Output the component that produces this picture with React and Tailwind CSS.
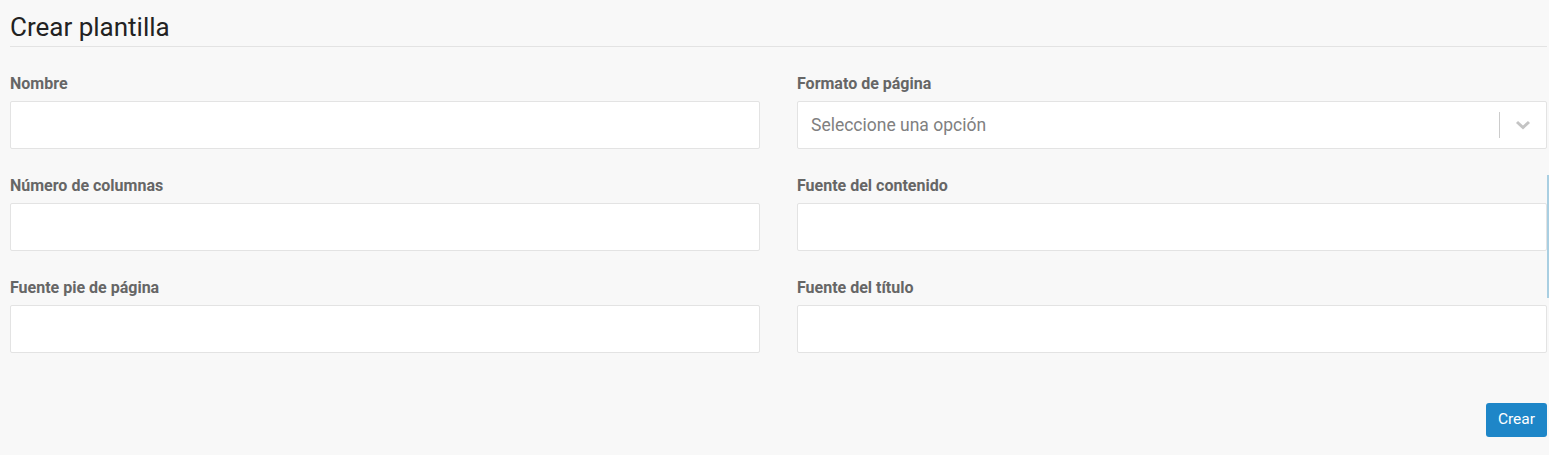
import React from "react";

const Field = ({ label, children }) => (
  <div className="flex flex-col">
    <label className="text-[16px] font-bold text-[#666666] leading-[20px] pt-[1px] mb-[7px]">{label}</label>
    {children}
  </div>
);

const TextInput = () => (
  <input
    type="text"
    className="h-[48px] w-full bg-white border border-[#e3e3e3] rounded-[2px] px-[12px] text-[17px] outline-none"
  />
);

const SelectBox = () => (
  <div className="h-[48px] w-full bg-white border border-[#e3e3e3] rounded-[2px] flex items-center">
    <span className="flex-1 pl-[13px] text-[17.5px] text-[#808080]">Seleccione una opción</span>
    <span className="w-px h-[26px] bg-[#cccccc]" />
    <span className="w-[46px] flex items-center justify-center">
      <svg width="16" height="10" viewBox="0 0 16 10">
        <path d="M2 2 L8 7.5 L14 2" fill="none" stroke="#c4c4c4" strokeWidth="3" />
      </svg>
    </span>
  </div>
);

export default function App() {
  return (
    <div className="relative min-h-[455px] bg-[#f8f8f8] pl-[10px] pr-[2px] pt-[11px] pb-[18px] font-['Roboto',sans-serif] text-[#333333]">
      <h1 className="text-[26px] leading-[32px] text-[#222222] pb-[3px] border-b border-[#e3e3e3]">Crear plantilla</h1>
      <div className="grid grid-cols-2 gap-x-[37px] gap-y-[26px] mt-[26px]">
        <Field label="Nombre"><TextInput /></Field>
        <Field label="Formato de página"><SelectBox /></Field>
        <Field label="Número de columnas"><TextInput /></Field>
        <Field label="Fuente del contenido"><TextInput /></Field>
        <Field label="Fuente pie de página"><TextInput /></Field>
        <Field label="Fuente del título"><TextInput /></Field>
      </div>
      <div className="flex justify-end mt-[50px]">
        <button className="h-[34px] px-[12px] rounded-[3px] bg-[#1e86c8] text-white text-[15.5px]">Crear</button>
      </div>
      <div className="absolute right-0 top-[175px] w-[2px] h-[123px] bg-[#a9cfe2]" />
    </div>
  );
}
